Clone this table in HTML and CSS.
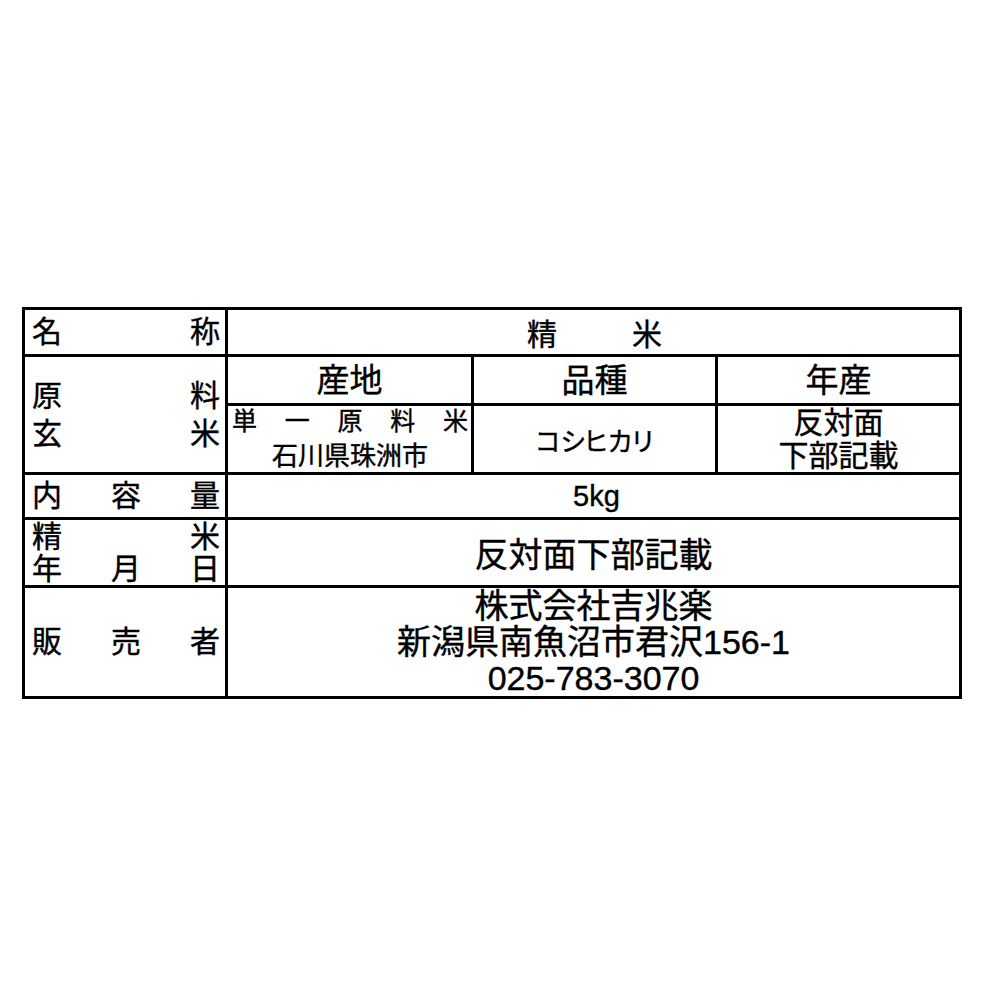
FILE: index.html
```html
<!DOCTYPE html>
<html lang="ja">
<head>
<meta charset="utf-8">
<title>精米 表示</title>
<link rel="stylesheet" href="styles.css">
</head>
<body>
<div class="page">
  <div class="sheet">
    <div class="cell label"><div class="dist"><span>名</span><span>称</span></div></div>
    <div class="cell value wide title"><span>精</span><span>米</span></div>

    <div class="cell label tall">
      <div class="dist"><span>原</span><span>料</span></div>
      <div class="dist"><span>玄</span><span>米</span></div>
    </div>
    <div class="cell head">産地</div>
    <div class="cell head">品種</div>
    <div class="cell head">年産</div>
    <div class="cell data origin">
      <div class="dist single"><span>単</span><span>一</span><span>原</span><span>料</span><span>米</span></div>
      <div class="place">石川県珠洲市</div>
    </div>
    <div class="cell data variety">コシヒカリ</div>
    <div class="cell data year"><div>反対面</div><div>下部記載</div></div>

    <div class="cell label"><div class="dist"><span>内</span><span>容</span><span>量</span></div></div>
    <div class="cell value wide weight">5kg</div>

    <div class="cell label date">
      <div class="dist"><span>精</span><span>米</span></div>
      <div class="dist"><span>年</span><span>月</span><span>日</span></div>
    </div>
    <div class="cell value wide big">反対面下部記載</div>

    <div class="cell label"><div class="dist"><span>販</span><span>売</span><span>者</span></div></div>
    <div class="cell value wide big seller">
      <div>株式会社吉兆楽</div>
      <div>新潟県南魚沼市君沢156-1</div>
      <div>025-783-3070</div>
    </div>
  </div>
</div>
</body>
</html>
```

FILE: styles.css
```css
html, body {
  margin: 0;
  padding: 0;
  background: #ffffff;
}

body {
  font-family: "Liberation Sans", "Noto Sans CJK JP", sans-serif;
  color: #000000;
  -webkit-text-stroke: 0.4px #000000;
}

.page {
  padding: 307px 0 0 22px;
}

.sheet {
  display: inline-grid;
  grid-template-columns: 200px 243px 241px 241px;
  grid-template-rows: 44px 46px 66px 42px 65px 108px;
  gap: 3px;
  padding: 3px;
  background: #000000;
}

.cell {
  background: #ffffff;
  display: flex;
  overflow: hidden;
  min-width: 0;
}

/* left label column */
.label {
  flex-direction: column;
  justify-content: center;
  padding: 0 5px 0 7px;
  font-size: 30px;
  line-height: 38px;
}

.label.tall {
  grid-row: span 2;
}

.label.date {
  line-height: 32px;
}

.dist {
  display: flex;
  justify-content: space-between;
}

/* value cells */
.value {
  align-items: center;
  justify-content: center;
}

.wide {
  grid-column: span 3;
}

.title {
  font-size: 30px;
  gap: 75px;
  padding-left: 2px;
}

.head {
  align-items: center;
  justify-content: center;
  font-size: 33px;
  line-height: 1;
}

.data {
  flex-direction: column;
  justify-content: center;
  align-items: center;
  text-align: center;
}

.origin {
  align-items: stretch;
  padding: 0 3px 0 4px;
  line-height: 35px;
}

.origin .single {
  font-size: 25px;
}

.origin .place {
  font-size: 26px;
}

.variety {
  font-size: 26px;
  font-feature-settings: "palt";
}

.year {
  font-size: 30px;
  line-height: 33px;
}

.weight {
  font-size: 29px;
  padding-left: 6px;
}

.big {
  font-size: 34px;
}

.seller {
  flex-direction: column;
  line-height: 36px;
  text-align: center;
}
```
